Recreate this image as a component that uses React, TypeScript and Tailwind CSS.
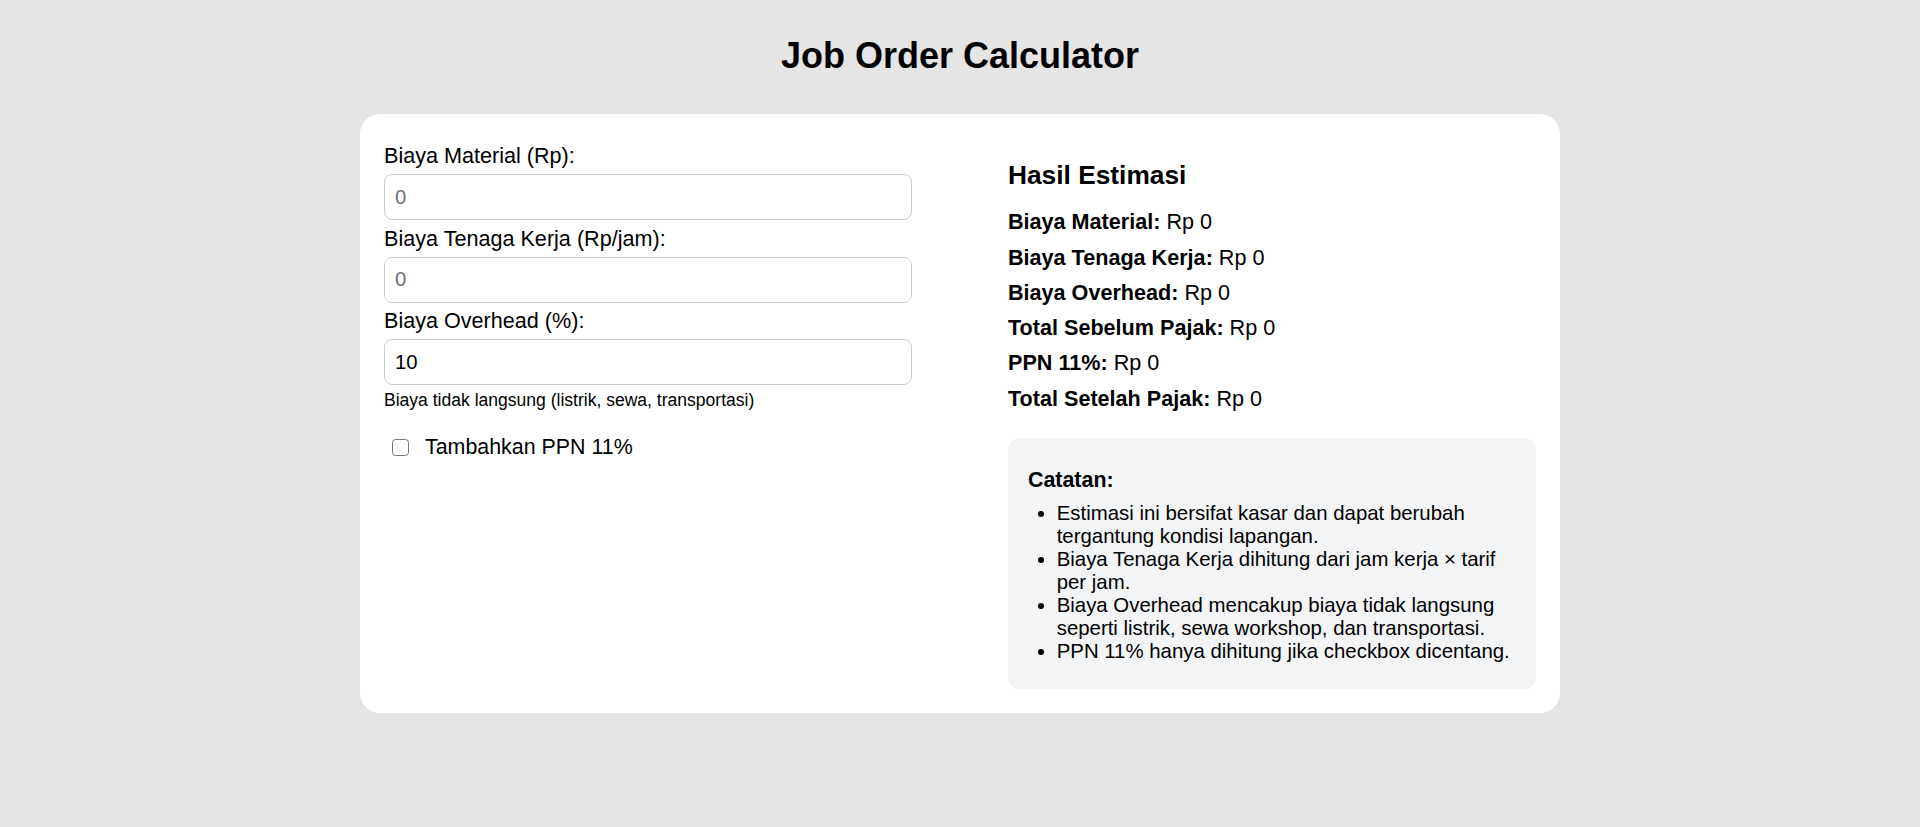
export default function App() {
  const results: [string, string][] = [
    ["Biaya Material:", "Rp 0"],
    ["Biaya Tenaga Kerja:", "Rp 0"],
    ["Biaya Overhead:", "Rp 0"],
    ["Total Sebelum Pajak:", "Rp 0"],
    ["PPN 11%:", "Rp 0"],
    ["Total Setelah Pajak:", "Rp 0"],
  ];
  const notes = [
    "Estimasi ini bersifat kasar dan dapat berubah tergantung kondisi lapangan.",
    "Biaya Tenaga Kerja dihitung dari jam kerja × tarif per jam.",
    "Biaya Overhead mencakup biaya tidak langsung seperti listrik, sewa workshop, dan transportasi.",
    "PPN 11% hanya dihitung jika checkbox dicentang.",
  ];
  return (
    <div className="min-h-screen bg-[#e5e5e5] font-['Liberation_Sans',Arial,sans-serif] text-black">
      <div className="pt-[36px]">
        <h1 className="text-center text-[36px] leading-[40px] font-bold mb-[37.5px]">
          Job Order Calculator
        </h1>
        <div className="mx-auto w-[1200px] bg-white rounded-[20px] px-6 pt-[29.5px] pb-6 grid grid-cols-2 gap-[96px]">
          {/* Left column */}
          <div className="flex flex-col">
            <label className="block text-[21.6px] leading-[25px] mb-[6px]">Biaya Material (Rp):</label>
            <input
              type="text"
              placeholder="0"
              className="block w-full h-[46px] border border-[#cccccc] rounded-[8px] pl-[10px] text-[20.3px] placeholder:text-[#6b7280] mb-[5.5px] outline-none"
            />
            <label className="block text-[21.6px] leading-[25px] mb-[6px]">Biaya Tenaga Kerja (Rp/jam):</label>
            <input
              type="text"
              placeholder="0"
              className="block w-full h-[46px] border border-[#cccccc] rounded-[8px] pl-[10px] text-[20.3px] placeholder:text-[#6b7280] mb-[5.5px] outline-none"
            />
            <label className="block text-[21.6px] leading-[25px] mb-[6px]">Biaya Overhead (%):</label>
            <input
              type="text"
              defaultValue="10"
              className="block w-full h-[46px] border border-[#cccccc] rounded-[8px] pl-[10px] text-[20.3px] text-black outline-none"
            />
            <small className="block mt-[5px] text-[17.55px] leading-[20px]">
              Biaya tidak langsung (listrik, sewa, transportasi)
            </small>
            <div className="mt-[25px] h-[25px] flex items-center">
              <input
                type="checkbox"
                id="ppn"
                className="appearance-none ml-[7.5px] w-[17px] h-[17px] border-[1.33px] border-[#767676] rounded-[3.5px] bg-white"
              />
              <label htmlFor="ppn" className="ml-[16.5px] text-[21.4px] leading-[25px]">
                Tambahkan PPN 11%
              </label>
            </div>
          </div>

          {/* Right column */}
          <div className="flex flex-col">
            <h2 className="mt-[17px] text-[26.3px] leading-[30px] font-bold mb-[20.3px]">Hasil Estimasi</h2>
            <div className="flex flex-col gap-[10.8px]">
              {results.map(([k, v]) => (
                <p key={k} className="text-[21.6px] leading-[24.5px]">
                  <strong className="font-bold">{k}</strong> {v}
                </p>
              ))}
            </div>
            <div className="mt-[27px] bg-[#f3f4f6] rounded-[12px] pt-[29.3px] pb-[26px] px-[20px]">
              <strong className="block font-bold text-[21.4px] leading-[24.5px]">Catatan:</strong>
              <ul className="mt-[10.2px] list-disc pl-[28.7px] text-[20.4px] leading-[23px]">
                {notes.map((n) => (
                  <li key={n}>{n}</li>
                ))}
              </ul>
            </div>
          </div>
        </div>
      </div>
    </div>
  );
}
